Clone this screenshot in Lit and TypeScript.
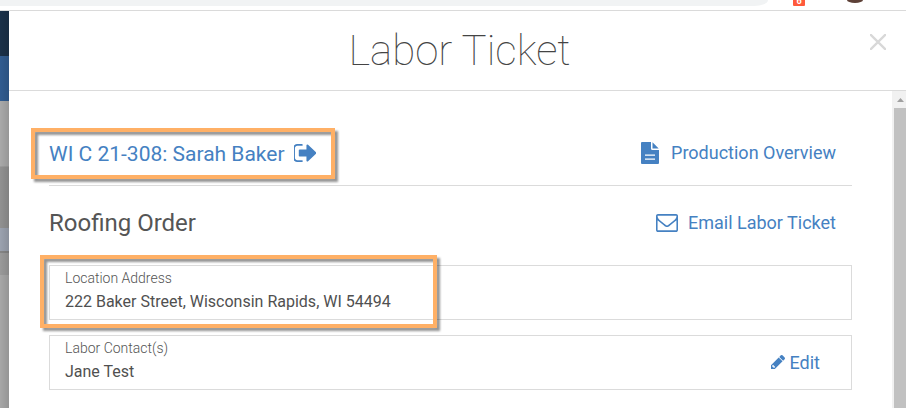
import { LitElement, html, css, svg } from "lit";
import { customElement, property } from "lit/decorators.js";

const ICONS: Record<string, { box: string; path: string }> = {
  exit: {
    box: "64 256 1504 1280",
    path: "M640 1440q0 4 1 20t.5 26.5-3 23.5-10 19.5-20.5 6.5h-320q-119 0-203.5-84.5t-84.5-203.5v-704q0-119 84.5-203.5t203.5-84.5h320q13 0 22.5 9.5t9.5 22.5q0 4 1 20t.5 26.5-3 23.5-10 19.5-20.5 6.5h-320q-66 0-113 47t-47 113v704q0 66 47 113t113 47h312l11.5 1 11.5 3 8 5.5 7 9 2 13.5zm928-544q0 26-19 45l-544 544q-19 19-45 19t-45-19-19-45v-288h-448q-26 0-45-19t-19-45v-384q0-26 19-45t45-19h448v-288q0-26 19-45t45-19 45 19l544 544q19 19 19 45z",
  },
  file: {
    box: "0 0 18 22",
    path: "M1 0H10V6.5Q10 8 11.5 8H18V21Q18 22 17 22H1Q0 22 0 21V1Q0 0 1 0ZM11.5 0.3L17.7 6.5H11.5ZM4 12.4V13.7H14V12.4ZM4 16.5V17.8H14V16.5Z",
  },
  mail: {
    box: "0 256 1792 1408",
    path: "M1664 1504v-768q-32 36-69 66-268 206-426 338-51 43-83 67t-86.5 48.5-102.5 24.5h-2q-48 0-102.5-24.5t-86.5-48.5-83-67q-158-132-426-338-37-30-69-66v768q0 13 9.5 22.5t22.5 9.5h1472q13 0 22.5-9.5t9.5-22.5zm0-1051v-24.5l-.5-13-3-12.5-5.5-9-9-7.5-14-2.5h-1472q-13 0-22.5 9.5t-9.5 22.5q0 168 147 284 193 152 401 317 6 5 35 29.5t46 37.5 44.5 31.5 50.5 27.5 43 9h2q20 0 43-9t50.5-27.5 44.5-31.5 46-37.5 35-29.5q208-165 401-317 54-43 100.5-115.5t46.5-131.5zm128-37v1088q0 66-47 113t-113 47h-1472q-66 0-113-47t-47-113v-1088q0-66 47-113t113-47h1472q66 0 113 47t47 113z",
  },
  pencil: {
    box: "128 149 1515 1515",
    path: "M491 1536l91-91-235-235-91 91v107h128v128h107zM960 416l416 416-832 832h-416v-416zm683 96q0 53-37 90l-166 166-416-416 166-165q36-38 90-38 53 0 91 38l235 234q37 39 37 91z",
  },
};

@customElement("app-icon")
export class AppIcon extends LitElement {
  @property() name = "exit";
  static styles = css`
    :host { display: block; flex: none; }
    svg { display: block; width: 100%; height: 100%; fill: currentColor; fill-rule: evenodd; }
  `;
  render() {
    const icon = ICONS[this.name];
    return html`<svg viewBox=${icon.box} preserveAspectRatio="none">${svg`<path d=${icon.path}></path>`}</svg>`;
  }
}

@customElement("info-card")
export class InfoCard extends LitElement {
  @property() label = "";
  @property() value = "";
  static styles = css`
    :host {
      display: flex; align-items: center; justify-content: space-between;
      box-sizing: border-box; height: 55px; border: 1px solid #dbdbdb;
      padding: 0 31px 0 15px;
    }
    .text { align-self: flex-start; margin-top: 2px; }
    .label { font-size: 14px; line-height: 20px; font-weight: 300; color: #555; }
    .value { font-size: 16px; line-height: 24px; color: #505050; margin-top: 2px; }
  `;
  render() {
    return html`<div class="text"><div class="label">${this.label}</div><div class="value">${this.value}</div></div><slot></slot>`;
  }
}

@customElement("app-root")
export class AppRoot extends LitElement {
  static styles = css`
    :host {
      display: flex; flex-direction: column; position: relative; width: 906px; height: 408px;
      overflow: hidden; background: #fff; color: #555;
      font-family: Roboto, sans-serif;
    }
    .browser {
      display: flex; align-items: flex-start; height: 11px; box-sizing: border-box;
      border-bottom: 1px solid #dadada; flex: none; overflow: hidden;
    }
    .omnibox { width: 768px; height: 6px; background: #f1f3f4; border-radius: 0 0 14px 0 / 0 0 6px 0; }
    .badge {
      width: 12px; height: 6px; margin-left: 25px; background: #ff5a3c; color: #fff;
      border-radius: 0 0 1px 1px; overflow: hidden; display: flex; justify-content: center; align-items: flex-end;
      font-size: 9px; line-height: 9px; font-weight: 700;
    }
    .avatar { width: 16px; height: 3px; margin-left: 42px; background: #5d4037; border-radius: 0 0 8px 8px / 0 0 3px 3px; }
    .stage { display: flex; flex: 1; min-height: 0; }
    .behind { width: 9px; flex: none; display: flex; flex-direction: column; background: #a7a7a7; position: relative; }
    .behind::after { content: ""; position: absolute; inset: 0; background: linear-gradient(90deg, #0000, #0000001c); }
    .navy { height: 45px; background: #1a3048; }
    .blue { height: 45px; background: #315c90; }
    .pale { height: 65px; background: #a9a9a9; }
    .mid { height: 62px; background: #919191; border-top: 1px solid #9c9c9c; box-sizing: border-box; }
    .row { height: 23px; background: #9ba2af; }
    .edge { height: 2px; background: #858585; }
    .foot { height: 22px; background: #9a9a9a; }
    .modal { flex: 1; display: flex; flex-direction: column; min-width: 0; }
    .head {
      height: 80px; box-sizing: border-box; border-bottom: 1px solid #dbdbdb; flex: none;
      display: grid; grid-template-columns: 1fr 48px; align-items: center;
    }
    h1 { margin: 0 0 0 52px; text-align: center; font-size: 42px; line-height: 50px; font-weight: 100; color: #444; }
    .close { width: 16px; height: 16px; margin: -17px 0 0 12px; stroke: #d8d8d8; stroke-width: 2.3; fill: none; }
    .body { flex: 1; display: flex; min-height: 0; }
    .content { flex: 1; padding: 0 40px; }
    .bar { display: flex; align-items: center; justify-content: space-between; padding-right: 16px; }
    .top { height: 95px; padding-top: 30px; box-sizing: border-box; border-bottom: 1px solid #dbdbdb; }
    .section { height: 79px; padding-bottom: 6px; box-sizing: border-box; }
    .link { display: flex; align-items: center; color: #4581c2; font-size: 18px; line-height: 24px; white-space: nowrap; }
    .job { font-size: 21px; gap: 9px; margin-top: 1px; }
    .job app-icon { width: 22.5px; height: 18px; margin-bottom: 2px; }
    .doc app-icon { width: 18px; height: 22px; margin-right: 12px; }
    .mail app-icon { width: 22px; height: 18px; margin-right: 10px; }
    .edit app-icon { width: 14px; height: 14px; margin: 0 5px 2px 0; }
    h2 { margin: 0; font-size: 24px; line-height: 30px; font-weight: 400; }
    info-card + info-card { margin-top: 15px; }
    .scroll { width: 14px; background: #f1f1f1; flex: none; display: flex; flex-direction: column; align-items: flex-end; }
    .arrow { width: 7px; height: 4px; margin: 7px 2px 6px 0; background: #a0a0a0; clip-path: polygon(50% 0, 100% 100%, 0 100%); }
    .thumb { width: 12px; flex: 1; background: #c1c1c1; }
    .mark {
      position: absolute; box-sizing: border-box; border: 4px solid #ffb066;
      filter: drop-shadow(3px 3px 1.2px rgba(0, 0, 0, 0.42));
    }
    .mark-job { left: 31px; top: 128px; width: 304px; height: 51px; }
    .mark-place { left: 40px; top: 255px; width: 397px; height: 73px; }
  `;
  render() {
    return html`
      <div class="browser"><div class="omnibox"></div><div class="badge">6</div><div class="avatar"></div></div>
      <div class="stage">
        <div class="behind">
          <div class="navy"></div><div class="blue"></div><div class="pale"></div><div class="mid"></div>
          <div class="row"></div><div class="edge"></div><div class="foot"></div>
        </div>
        <div class="modal">
          <div class="head">
            <h1>Labor Ticket</h1>
            <svg class="close" viewBox="0 0 16 16"><path d="M0 0L16 16M16 0L0 16"></path></svg>
          </div>
          <div class="body">
            <div class="content">
              <div class="bar top">
                <div class="link job"><span>WI C 21-308: Sarah Baker</span><app-icon name="exit"></app-icon></div>
                <div class="link doc"><app-icon name="file"></app-icon><span>Production Overview</span></div>
              </div>
              <div class="bar section">
                <h2>Roofing Order</h2>
                <div class="link mail"><app-icon name="mail"></app-icon><span>Email Labor Ticket</span></div>
              </div>
              <info-card label="Location Address" value="222 Baker Street, Wisconsin Rapids, WI 54494"></info-card>
              <info-card label="Labor Contact(s)" value="Jane Test">
                <div class="link edit"><app-icon name="pencil"></app-icon><span>Edit</span></div>
              </info-card>
            </div>
            <div class="scroll"><div class="arrow"></div><div class="thumb"></div></div>
          </div>
        </div>
      </div>
      <div class="mark mark-job"></div>
      <div class="mark mark-place"></div>
    `;
  }
}
